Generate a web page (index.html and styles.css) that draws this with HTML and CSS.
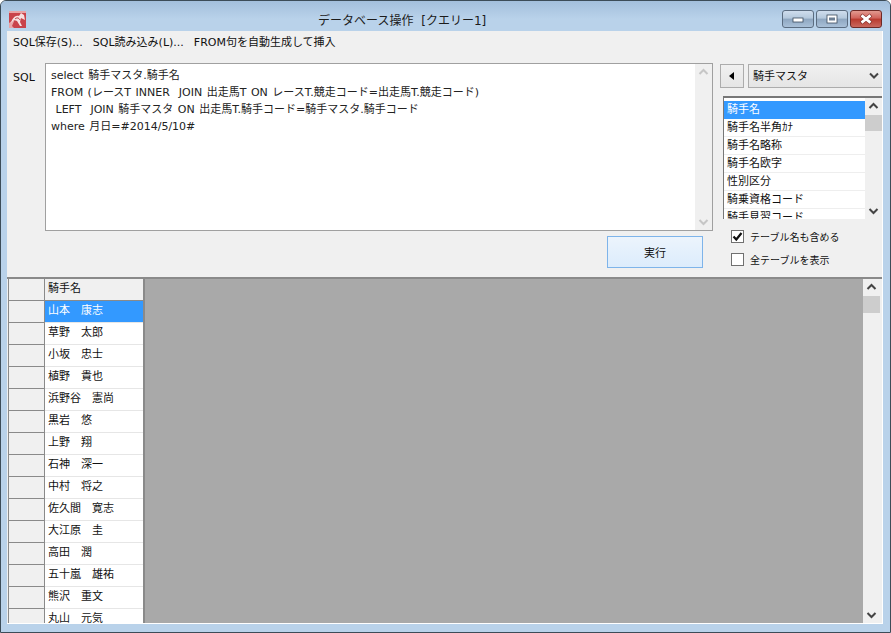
FILE: index.html
```html
<!DOCTYPE html>
<html lang="ja">
<head>
<meta charset="utf-8">
<title>データベース操作</title>
<link rel="stylesheet" href="styles.css">
</head>
<body>
<div class="window">
  <header class="titlebar">
    <svg class="app-icon" width="17" height="17" viewBox="0 0 17 17"><rect width="17" height="17" fill="#c9424a"/><path d="M0 0 H17 V2 H0 Z" fill="#e9a3a6"/><path d="M0 17 L0 12 L6 8 L3 15 L5 17 Z" fill="#e8a5a8"/><path d="M3 9 C5 5 8 4 10 5 L12 2 L15 4 L16 9 L14 8 L12 7 L11 11 L13 15 L11 15 L8 10 L5 9 L2 12 Z" fill="#f6dfe0"/><path d="M6 8 C8 6 10 7 11 9" fill="none" stroke="#b52e38"/></svg>
    <div class="title">データベース操作 [クエリー1]</div>
    <div class="caption-buttons">
      <div class="cap-btn"><svg width="12" height="8" viewBox="0 0 12 8"><rect x="1" y="3" width="10" height="4" fill="#fff" stroke="#3b4a5c" stroke-width=".8"/></svg></div>
      <div class="cap-btn"><svg width="12" height="10" viewBox="0 0 12 10"><rect x="1" y="1" width="10" height="8" fill="#fff" stroke="#3b4a5c" stroke-width=".8"/><rect x="3" y="3.5" width="6" height="3" fill="#6d7f94"/></svg></div>
      <div class="cap-btn close"><svg width="16" height="12" viewBox="0 0 16 12"><path d="M3 2 L13 10 M13 2 L3 10" stroke="#7c2a24" stroke-width="4"/><path d="M3.5 2.3 L12.5 9.7 M12.5 2.3 L3.5 9.7" stroke="#fff" stroke-width="2.8"/></svg></div>
    </div>
  </header>
  <div class="client">
    <nav class="menubar">
      <span>SQL保存(S)...</span><span>SQL読み込み(L)...</span><span>FROM句を自動生成して挿入</span>
    </nav>
    <section class="top-panel">
      <div class="sql-label">SQL</div>
      <div class="editor-col">
        <div class="editor">
          <div class="editor-text">select 騎手マスタ.騎手名
FROM (レースT INNER&nbsp; JOIN 出走馬T ON レースT.競走コード=出走馬T.競走コード)
&nbsp;LEFT&nbsp; JOIN 騎手マスタ ON 出走馬T.騎手コード=騎手マスタ.騎手コード
where 月日=#2014/5/10#</div>
          <div class="scrollbar faint">
            <svg class="arrow" width="17" height="17" viewBox="0 0 17 17"><path d="M4.5 10 L8.5 6 L12.5 10" fill="none" stroke="#c6c6c6" stroke-width="2"/></svg>
            <svg class="arrow" width="17" height="17" viewBox="0 0 17 17"><path d="M4.5 7 L8.5 11 L12.5 7" fill="none" stroke="#c6c6c6" stroke-width="2"/></svg>
          </div>
        </div>
        <div class="run-row"><button class="run">実行</button></div>
      </div>
      <aside class="side">
        <div class="table-picker">
          <div class="back-btn"><svg width="6" height="8" viewBox="0 0 6 8"><path d="M5 0 V8 L0 4 Z" fill="#000"/></svg></div>
          <div class="combo"><span>騎手マスタ</span><svg width="10" height="7" viewBox="0 0 10 7"><path d="M1 1.5 L5 5.5 L9 1.5" fill="none" stroke="#444" stroke-width="2"/></svg></div>
        </div>
        <div class="listbox">
          <div class="list-items">
            <div class="list-item selected">騎手名</div>
            <div class="list-item">騎手名半角ｶﾅ</div>
            <div class="list-item">騎手名略称</div>
            <div class="list-item">騎手名欧字</div>
            <div class="list-item">性別区分</div>
            <div class="list-item">騎乗資格コード</div>
            <div class="list-item">騎手見習コード</div>
          </div>
          <div class="scrollbar">
            <svg class="arrow" width="17" height="17" viewBox="0 0 17 17"><path d="M4.5 10 L8.5 6 L12.5 10" fill="none" stroke="#444" stroke-width="2"/></svg>
            <div class="thumb list-thumb"></div>
            <div class="spacer"></div>
            <svg class="arrow" width="17" height="17" viewBox="0 0 17 17"><path d="M4.5 7 L8.5 11 L12.5 7" fill="none" stroke="#444" stroke-width="2"/></svg>
          </div>
        </div>
        <label class="check"><span class="box"><svg width="13" height="13" viewBox="0 0 13 13"><path d="M2.5 6.5 L5.3 9.5 L10.5 3" fill="none" stroke="#111" stroke-width="2.2"/></svg></span>テーブル名も含める</label>
        <label class="check"><span class="box"></span>全テーブルを表示</label>
      </aside>
    </section>
    <section class="grid-panel">
      <div class="data-grid">
        <div class="grid-row head"><div class="row-head"></div><div class="cell">騎手名</div></div>
        <div class="grid-row active"><div class="row-head"></div><div class="cell">山本　康志</div></div>
        <div class="grid-row"><div class="row-head"></div><div class="cell">草野　太郎</div></div>
        <div class="grid-row"><div class="row-head"></div><div class="cell">小坂　忠士</div></div>
        <div class="grid-row"><div class="row-head"></div><div class="cell">植野　貴也</div></div>
        <div class="grid-row"><div class="row-head"></div><div class="cell">浜野谷　憲尚</div></div>
        <div class="grid-row"><div class="row-head"></div><div class="cell">黒岩　悠</div></div>
        <div class="grid-row"><div class="row-head"></div><div class="cell">上野　翔</div></div>
        <div class="grid-row"><div class="row-head"></div><div class="cell">石神　深一</div></div>
        <div class="grid-row"><div class="row-head"></div><div class="cell">中村　将之</div></div>
        <div class="grid-row"><div class="row-head"></div><div class="cell">佐久間　寛志</div></div>
        <div class="grid-row"><div class="row-head"></div><div class="cell">大江原　圭</div></div>
        <div class="grid-row"><div class="row-head"></div><div class="cell">高田　潤</div></div>
        <div class="grid-row"><div class="row-head"></div><div class="cell">五十嵐　雄祐</div></div>
        <div class="grid-row"><div class="row-head"></div><div class="cell">熊沢　重文</div></div>
        <div class="grid-row"><div class="row-head"></div><div class="cell">丸山　元気</div></div>
      </div>
      <div class="grid-empty"></div>
      <div class="scrollbar grid-scroll">
        <svg class="arrow" width="17" height="17" viewBox="0 0 17 17"><path d="M4.5 10 L8.5 6 L12.5 10" fill="none" stroke="#444" stroke-width="2"/></svg>
        <div class="thumb grid-thumb"></div>
        <div class="spacer"></div>
        <svg class="arrow" width="17" height="17" viewBox="0 0 17 17"><path d="M4.5 7 L8.5 11 L12.5 7" fill="none" stroke="#444" stroke-width="2"/></svg>
      </div>
    </section>
  </div>
</div>
</body>
</html>
```
FILE: styles.css
```css
* { box-sizing: border-box; }
html, body { margin: 0; padding: 0; }
body {
  width: 891px;
  height: 633px;
  overflow: hidden;
  background: #fff;
  font-family: "DejaVu Sans", "Noto Sans CJK JP", sans-serif;
  font-size: 11px;
  color: #111;
}
.window {
  width: 891px;
  height: 633px;
  display: flex;
  flex-direction: column;
  border: 1px solid #3c4c58;
  border-radius: 6px 6px 0 0;
  background: #b9d2ea;
  overflow: hidden;
  padding: 0 7px 8px 6px;
}
.titlebar {
  height: 30px;
  flex: none;
  margin: 0 -7px 0 -6px;
  padding: 0 7px 0 8px;
  display: flex;
  align-items: center;
  position: relative;
  background: linear-gradient(#a3bfdc, #b9d2ea 60%);
}
.app-icon { margin-top: 6px; }
.title {
  position: absolute;
  left: 317px;
  top: 10px;
  font-size: 12px;
  word-spacing: 4px;
  line-height: 20px;
  color: #1c1c1c;
}
.caption-buttons {
  margin-left: auto;
  margin-top: 6px;
  display: flex;
  gap: 2px;
  padding-right: 1px;
}
.cap-btn {
  width: 32px;
  height: 18px;
  border: 1px solid #5b6c80;
  border-radius: 3px;
  background: linear-gradient(#cfdded, #b4c8dc 45%, #8ea6c0 50%, #a9c0d8);
  display: flex;
  align-items: center;
  justify-content: center;
}
.cap-btn.close {
  width: 32px;
  border-color: #6e2a26;
  background: linear-gradient(#e29a90, #d0625a 45%, #b93a2e 50%, #c9685e);
}
.client {
  flex: 1;
  min-height: 0;
  display: flex;
  flex-direction: column;
  background: #f0f0f0;
  border-right: 1px solid #fff;
  border-bottom: 1px solid #fff;
}
.menubar {
  height: 22px;
  flex: none;
  display: flex;
  gap: 10px;
  padding-left: 6px;
  line-height: 23px;
  white-space: nowrap;
}
.top-panel {
  height: 226px;
  flex: none;
  display: flex;
  border-bottom: 2px solid #8a8a8a;
}
.sql-label {
  width: 38px;
  flex: none;
  padding: 17px 0 0 6px;
  line-height: 16px;
}
.editor-col {
  width: 668px;
  flex: none;
  padding-top: 10px;
}
.editor {
  height: 168px;
  display: flex;
  background: #fff;
  border: 1px solid #a0a0a0;
}
.editor-text {
  flex: 1;
  padding: 3px 5px;
  line-height: 17px;
  word-spacing: 1px;
  white-space: pre-wrap;
  color: #222;
}
.scrollbar {
  width: 17px;
  flex: none;
  display: flex;
  flex-direction: column;
  background: #f0f0f0;
}
.scrollbar.faint { justify-content: space-between; }
.arrow { flex: none; display: block; }
.spacer { flex: 1; }
.thumb { background: #cdcdcd; flex: none; }
.run-row {
  display: flex;
  justify-content: flex-end;
  padding: 5px 10px 0 0;
}
.run {
  width: 96px;
  height: 32px;
  padding: 0;
  border: 1px solid #7eb4ea;
  border-radius: 0;
  background: linear-gradient(#ecf4fc, #dcecfc);
  font: inherit;
  color: #111;
}
.side {
  flex: 1;
  min-width: 0;
  padding: 11px 0 0 7px;
}
.table-picker {
  display: flex;
  gap: 4px;
  height: 24px;
}
.back-btn {
  width: 24px;
  border: 1px solid #acacac;
  background: linear-gradient(#f0f0f0, #e5e5e5);
  display: flex;
  align-items: center;
  justify-content: center;
}
.combo {
  flex: 1;
  border: 1px solid #acacac;
  border-right: 0;
  background: linear-gradient(#f0f0f0, #e5e5e5);
  display: flex;
  align-items: center;
  justify-content: space-between;
  padding: 0 3px 2px 4px;
}
.listbox {
  height: 123px;
  margin: 8px 0 0 3px;
  display: flex;
  border-left: 1px solid #777;
  border-top: 2px solid #777;
  background: #fff;
  overflow: hidden;
}
.list-items {
  flex: 1;
  min-width: 0;
  padding: 3px 0 0 0;
}
.list-item {
  height: 18px;
  line-height: 18px;
  padding-left: 3px;
  border-bottom: 1px solid #eee;
  white-space: nowrap;
}
.list-item.selected {
  background: #3399ff;
  color: #fff;
  border-bottom-color: #3399ff;
}
.list-thumb { height: 16px; }
.check {
  display: flex;
  align-items: center;
  gap: 6px;
  height: 23px;
  padding-left: 11px;
  white-space: nowrap;
  font-size: 10px;
}
.listbox + .check { margin-top: 6px; }
.box {
  width: 13px;
  height: 13px;
  flex: none;
  border: 1px solid #707070;
  background: #fff;
  display: block;
}
.box svg { display: block; margin: -1px; }
.grid-panel {
  flex: 1;
  min-height: 0;
  display: flex;
  padding-right: 2px;
  overflow: hidden;
}
.data-grid {
  width: 137px;
  flex: none;
  margin-left: 1px;
  border-left: 1px solid #8a8a8a;
  border-right: 2px solid #8a8a8a;
  background: #fff;
  overflow: hidden;
}
.grid-row {
  display: flex;
  height: 22px;
}
.row-head {
  width: 36px;
  flex: none;
  background: #f0f0f0;
  border-right: 1px solid #8a8a8a;
  border-bottom: 1px solid #8a8a8a;
}
.cell {
  flex: 1;
  min-width: 0;
  padding-left: 3px;
  line-height: 19px;
  border-bottom: 1px solid #e6e6e6;
  white-space: nowrap;
}
.head .cell {
  background: #f0f0f0;
  border-bottom: 1px solid #8a8a8a;
  line-height: 20px;
}
.active .cell {
  background: #3399ff;
  color: #fff;
}
.grid-empty {
  flex: 1;
  background: #a9a9a9;
}
.grid-thumb { height: 17px; }
```
